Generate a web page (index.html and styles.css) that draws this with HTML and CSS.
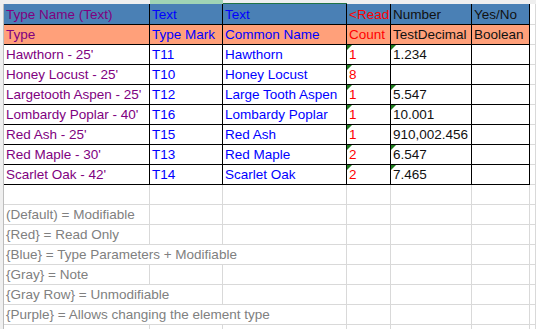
FILE: index.html
```
<!DOCTYPE html>
<html>
<head>
<meta charset="utf-8">
<link rel="stylesheet" href="styles.css">
</head>
<body>
<div class="sheet">
  <div class="colheads">
    <div class="ch ch-a"></div>
    <div class="ch ch-b"></div>
    <div class="ch ch-c"></div>
    <div class="ch ch-rest"></div>
  </div>
  <div class="main">
    <div class="rowheads"></div>
    <div class="grid">
      <div class="c t hb first purple">Type Name (Text)</div>
      <div class="c t hb first blue">Text</div>
      <div class="c t hb first blue">Text</div>
      <div class="c t hb first red">&lt;Read</div>
      <div class="c t hb first dark">Number</div>
      <div class="c t hb first dark">Yes/No</div>
      <div class="c g first"></div>

      <div class="c t hs purple">Type</div>
      <div class="c t hs blue">Type Mark</div>
      <div class="c t hs blue">Common Name</div>
      <div class="c t hs red">Count</div>
      <div class="c t hs dark">TestDecimal</div>
      <div class="c t hs dark">Boolean</div>
      <div class="c g"></div>

      <div class="c t purple">Hawthorn - 25'</div>
      <div class="c t blue">T11</div>
      <div class="c t blue">Hawthorn</div>
      <div class="c t red tri">1</div>
      <div class="c t dark tri">1.234</div>
      <div class="c t"></div>
      <div class="c g"></div>

      <div class="c t purple">Honey Locust - 25'</div>
      <div class="c t blue">T10</div>
      <div class="c t blue">Honey Locust</div>
      <div class="c t red tri">8</div>
      <div class="c t dark"></div>
      <div class="c t"></div>
      <div class="c g"></div>

      <div class="c t purple">Largetooth Aspen - 25'</div>
      <div class="c t blue">T12</div>
      <div class="c t blue">Large Tooth Aspen</div>
      <div class="c t red tri">1</div>
      <div class="c t dark tri">5.547</div>
      <div class="c t"></div>
      <div class="c g"></div>

      <div class="c t purple">Lombardy Poplar - 40'</div>
      <div class="c t blue">T16</div>
      <div class="c t blue">Lombardy Poplar</div>
      <div class="c t red tri">1</div>
      <div class="c t dark tri">10.001</div>
      <div class="c t"></div>
      <div class="c g"></div>

      <div class="c t purple">Red Ash - 25'</div>
      <div class="c t blue">T15</div>
      <div class="c t blue">Red Ash</div>
      <div class="c t red tri">1</div>
      <div class="c t dark">910,002.456</div>
      <div class="c t"></div>
      <div class="c g"></div>

      <div class="c t purple">Red Maple - 30'</div>
      <div class="c t blue">T13</div>
      <div class="c t blue">Red Maple</div>
      <div class="c t red tri">2</div>
      <div class="c t dark tri">6.547</div>
      <div class="c t"></div>
      <div class="c g"></div>

      <div class="c t purple">Scarlet Oak - 42'</div>
      <div class="c t blue">T14</div>
      <div class="c t blue">Scarlet Oak</div>
      <div class="c t red tri">2</div>
      <div class="c t dark tri">7.465</div>
      <div class="c t"></div>
      <div class="c g"></div>

      <div class="c g"></div><div class="c g"></div><div class="c g"></div><div class="c g"></div><div class="c g"></div><div class="c g"></div><div class="c g"></div>

      <div class="c g note">(Default) = Modifiable</div>
      <div class="c g"></div><div class="c g"></div><div class="c g"></div><div class="c g"></div><div class="c g"></div><div class="c g"></div>

      <div class="c g note">{Red} = Read Only</div>
      <div class="c g"></div><div class="c g"></div><div class="c g"></div><div class="c g"></div><div class="c g"></div><div class="c g"></div>

      <div class="c g note span3">{Blue} = Type Parameters + Modifiable</div>
      <div class="c g"></div><div class="c g"></div><div class="c g"></div><div class="c g"></div>

      <div class="c g note">{Gray} = Note</div>
      <div class="c g"></div><div class="c g"></div><div class="c g"></div><div class="c g"></div><div class="c g"></div><div class="c g"></div>

      <div class="c g note span2">{Gray Row} = Unmodifiable</div>
      <div class="c g"></div><div class="c g"></div><div class="c g"></div><div class="c g"></div><div class="c g"></div>

      <div class="c g note span3">{Purple} = Allows changing the element type</div>
      <div class="c g"></div><div class="c g"></div><div class="c g"></div><div class="c g"></div>

      <div class="c g"></div><div class="c g"></div><div class="c g"></div><div class="c g"></div><div class="c g"></div><div class="c g"></div><div class="c g"></div>
    </div>
  </div>
</div>
</body>
</html>
```
FILE: styles.css
```
html, body {
  margin: 0;
  padding: 0;
  background: #ffffff;
}
body {
  width: 536px;
  height: 329px;
  overflow: hidden;
  font-family: "Liberation Sans", Arial, sans-serif;
  font-size: 13.5px;
}
.sheet {
  display: flex;
  flex-direction: column;
}
.colheads {
  display: flex;
  height: 4px;
  background: #efefef;
}
.ch {
  box-sizing: border-box;
  height: 4px;
}
.ch-a { width: 150px; }
.ch-b { width: 73px; background: #a0d4b5; }
.ch-c { width: 124px; border-bottom: 1px solid #217346; }
.ch-rest { flex: 1; }
.main {
  display: flex;
}
.rowheads {
  width: 3px;
  flex: none;
  background: #efefef;
  border-right: 1px solid #bdbdbd;
}
.grid {
  display: grid;
  grid-template-columns: 146px 73px 124px 44px 81px 58px 1fr;
  grid-template-rows: 21px;
  grid-auto-rows: 20px;
  flex: 1;
}
.c {
  box-sizing: border-box;
  height: 20px;
  line-height: 19px;
  padding-left: 2px;
  white-space: nowrap;
  overflow: hidden;
  position: relative;
}
.c.first {
  height: 21px;
  padding-top: 1px;
}
.t {
  border-right: 1px solid #000000;
  border-bottom: 1px solid #000000;
}
.g {
  border-right: 1px solid #d9d9d9;
  border-bottom: 1px solid #d9d9d9;
}
.hb { background: #4a80b5; }
.hs { background: #ffa07a; }
.purple { color: #800080; }
.blue { color: #0000ff; }
.red { color: #ff0000; }
.dark { color: #111111; }
.note { color: #808080; }
.span2 { grid-column: span 2; }
.span3 { grid-column: span 3; }
.tri::before {
  content: "";
  position: absolute;
  left: 0;
  top: 0;
  width: 0;
  height: 0;
  border-top: 5px solid #1e7b1e;
  border-right: 5px solid transparent;
}
```
